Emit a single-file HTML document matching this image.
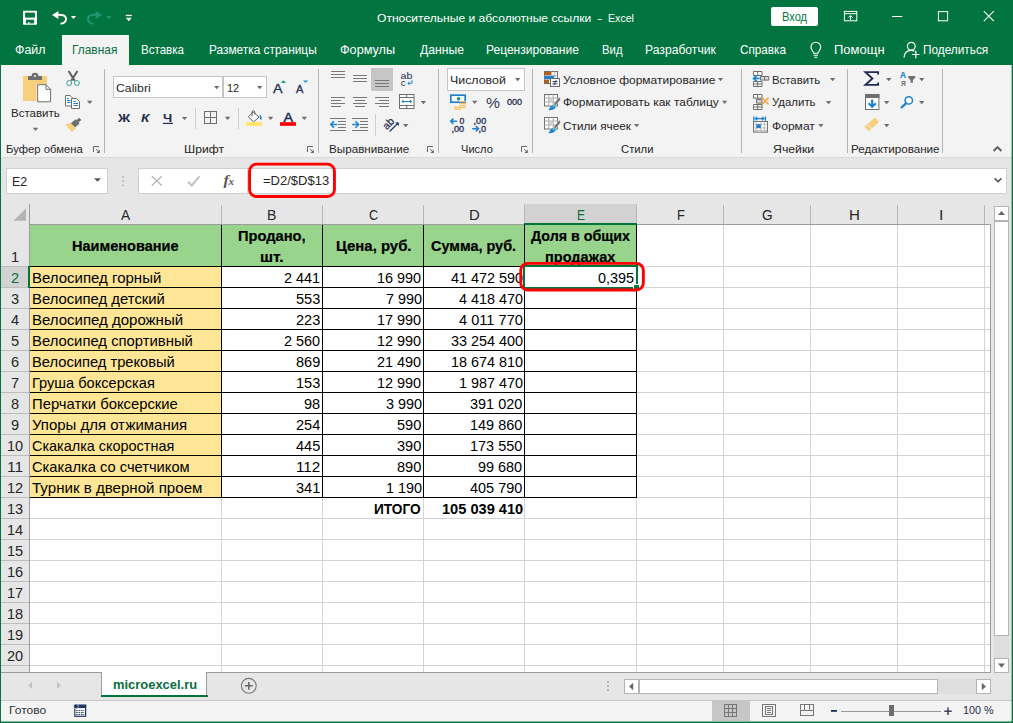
<!DOCTYPE html>
<html lang="ru"><head><meta charset="utf-8"><title>Excel</title>
<style>
html,body{margin:0;padding:0;background:#e6e6e6;}
body{width:1013px;height:723px;overflow:hidden;position:relative;font-family:"Liberation Sans", sans-serif;}
#w{position:absolute;left:0;top:0;width:1013px;height:723px;overflow:hidden;background:#e6e6e6;}
#w div{position:absolute;}
#w span.t{position:absolute;white-space:pre;line-height:20px;height:20px;transform-origin:0 50%;}
#w svg{position:absolute;overflow:visible;}
</style></head>
<body><div id="w">
<div style="left:0px;top:0px;width:1013px;height:65px;background:#02743f"></div>
<div style="left:62px;top:35px;width:67px;height:30px;background:#f3f3f3"></div>
<div style="left:0px;top:65px;width:1013px;height:92px;background:#f3f3f3"></div>
<div style="left:0px;top:157px;width:1013px;height:1px;background:#dadada"></div>
<div style="left:104px;top:69px;width:1px;height:84px;background:#b4b4b4"></div>
<div style="left:318px;top:69px;width:1px;height:84px;background:#b4b4b4"></div>
<div style="left:438px;top:69px;width:1px;height:84px;background:#b4b4b4"></div>
<div style="left:532px;top:69px;width:1px;height:84px;background:#b4b4b4"></div>
<div style="left:741px;top:69px;width:1px;height:84px;background:#b4b4b4"></div>
<div style="left:847px;top:69px;width:1px;height:84px;background:#b4b4b4"></div>
<div style="left:942px;top:69px;width:1px;height:84px;background:#b4b4b4"></div>
<div style="left:195px;top:108px;width:1px;height:21px;background:#d0d0d0"></div>
<div style="left:238px;top:108px;width:1px;height:21px;background:#d0d0d0"></div>
<div style="left:375px;top:114px;width:1px;height:22px;background:#d0d0d0"></div>
<div style="left:113px;top:76px;width:110px;height:22px;background:#fff;border:1px solid #c6c6c6;box-sizing:border-box"></div>
<div style="left:223px;top:76px;width:44px;height:22px;background:#fff;border:1px solid #c6c6c6;box-sizing:border-box"></div>
<div style="left:447px;top:68px;width:78px;height:23px;background:#fff;border:1px solid #c6c6c6;box-sizing:border-box"></div>
<div style="left:371px;top:68px;width:22px;height:23px;background:#c6c6c6"></div>
<div style="left:6px;top:168px;width:102px;height:26px;background:#fff;border:1px solid #cfcfcf;box-sizing:border-box"></div>
<div style="left:138px;top:168px;width:869px;height:26px;background:#fff;border:1px solid #cfcfcf;box-sizing:border-box"></div>
<div style="left:29px;top:224px;width:962px;height:449px;background:#fff"></div>
<div style="left:524px;top:204px;width:113px;height:20px;background:#d2d2d2"></div>
<div style="left:1px;top:267px;width:28px;height:20px;background:#d2d2d2"></div>
<div style="left:29px;top:205px;width:1px;height:19px;background:#b8b8b8"></div>
<div style="left:221px;top:205px;width:1px;height:19px;background:#b8b8b8"></div>
<div style="left:322px;top:205px;width:1px;height:19px;background:#b8b8b8"></div>
<div style="left:423px;top:205px;width:1px;height:19px;background:#b8b8b8"></div>
<div style="left:524px;top:205px;width:1px;height:19px;background:#b8b8b8"></div>
<div style="left:636px;top:205px;width:1px;height:19px;background:#b8b8b8"></div>
<div style="left:723px;top:205px;width:1px;height:19px;background:#b8b8b8"></div>
<div style="left:810px;top:205px;width:1px;height:19px;background:#b8b8b8"></div>
<div style="left:897px;top:205px;width:1px;height:19px;background:#b8b8b8"></div>
<div style="left:984px;top:205px;width:1px;height:19px;background:#b8b8b8"></div>
<div style="left:1px;top:266px;width:28px;height:1px;background:#bdbdbd"></div>
<div style="left:1px;top:287px;width:28px;height:1px;background:#bdbdbd"></div>
<div style="left:1px;top:308px;width:28px;height:1px;background:#bdbdbd"></div>
<div style="left:1px;top:329px;width:28px;height:1px;background:#bdbdbd"></div>
<div style="left:1px;top:350px;width:28px;height:1px;background:#bdbdbd"></div>
<div style="left:1px;top:371px;width:28px;height:1px;background:#bdbdbd"></div>
<div style="left:1px;top:392px;width:28px;height:1px;background:#bdbdbd"></div>
<div style="left:1px;top:413px;width:28px;height:1px;background:#bdbdbd"></div>
<div style="left:1px;top:434px;width:28px;height:1px;background:#bdbdbd"></div>
<div style="left:1px;top:455px;width:28px;height:1px;background:#bdbdbd"></div>
<div style="left:1px;top:476px;width:28px;height:1px;background:#bdbdbd"></div>
<div style="left:1px;top:497px;width:28px;height:1px;background:#bdbdbd"></div>
<div style="left:1px;top:518px;width:28px;height:1px;background:#bdbdbd"></div>
<div style="left:1px;top:539px;width:28px;height:1px;background:#bdbdbd"></div>
<div style="left:1px;top:560px;width:28px;height:1px;background:#bdbdbd"></div>
<div style="left:1px;top:581px;width:28px;height:1px;background:#bdbdbd"></div>
<div style="left:1px;top:602px;width:28px;height:1px;background:#bdbdbd"></div>
<div style="left:1px;top:623px;width:28px;height:1px;background:#bdbdbd"></div>
<div style="left:1px;top:644px;width:28px;height:1px;background:#bdbdbd"></div>
<div style="left:1px;top:665px;width:28px;height:1px;background:#bdbdbd"></div>
<div style="left:221px;top:225px;width:1px;height:447px;background:#d4d4d4"></div>
<div style="left:322px;top:225px;width:1px;height:447px;background:#d4d4d4"></div>
<div style="left:423px;top:225px;width:1px;height:447px;background:#d4d4d4"></div>
<div style="left:524px;top:225px;width:1px;height:447px;background:#d4d4d4"></div>
<div style="left:636px;top:225px;width:1px;height:447px;background:#d4d4d4"></div>
<div style="left:723px;top:225px;width:1px;height:447px;background:#d4d4d4"></div>
<div style="left:810px;top:225px;width:1px;height:447px;background:#d4d4d4"></div>
<div style="left:897px;top:225px;width:1px;height:447px;background:#d4d4d4"></div>
<div style="left:984px;top:225px;width:1px;height:447px;background:#d4d4d4"></div>
<div style="left:30px;top:266px;width:960px;height:1px;background:#d4d4d4"></div>
<div style="left:30px;top:287px;width:960px;height:1px;background:#d4d4d4"></div>
<div style="left:30px;top:308px;width:960px;height:1px;background:#d4d4d4"></div>
<div style="left:30px;top:329px;width:960px;height:1px;background:#d4d4d4"></div>
<div style="left:30px;top:350px;width:960px;height:1px;background:#d4d4d4"></div>
<div style="left:30px;top:371px;width:960px;height:1px;background:#d4d4d4"></div>
<div style="left:30px;top:392px;width:960px;height:1px;background:#d4d4d4"></div>
<div style="left:30px;top:413px;width:960px;height:1px;background:#d4d4d4"></div>
<div style="left:30px;top:434px;width:960px;height:1px;background:#d4d4d4"></div>
<div style="left:30px;top:455px;width:960px;height:1px;background:#d4d4d4"></div>
<div style="left:30px;top:476px;width:960px;height:1px;background:#d4d4d4"></div>
<div style="left:30px;top:497px;width:960px;height:1px;background:#d4d4d4"></div>
<div style="left:30px;top:518px;width:960px;height:1px;background:#d4d4d4"></div>
<div style="left:30px;top:539px;width:960px;height:1px;background:#d4d4d4"></div>
<div style="left:30px;top:560px;width:960px;height:1px;background:#d4d4d4"></div>
<div style="left:30px;top:581px;width:960px;height:1px;background:#d4d4d4"></div>
<div style="left:30px;top:602px;width:960px;height:1px;background:#d4d4d4"></div>
<div style="left:30px;top:623px;width:960px;height:1px;background:#d4d4d4"></div>
<div style="left:30px;top:644px;width:960px;height:1px;background:#d4d4d4"></div>
<div style="left:30px;top:665px;width:960px;height:1px;background:#d4d4d4"></div>
<div style="left:30px;top:225px;width:607px;height:41px;background:#98d48c"></div>
<div style="left:30px;top:267px;width:191px;height:230px;background:#fee696"></div>
<div style="left:221px;top:224px;width:1px;height:274px;background:#000"></div>
<div style="left:322px;top:224px;width:1px;height:274px;background:#000"></div>
<div style="left:423px;top:224px;width:1px;height:274px;background:#000"></div>
<div style="left:524px;top:224px;width:1px;height:274px;background:#000"></div>
<div style="left:636px;top:224px;width:1px;height:274px;background:#000"></div>
<div style="left:29px;top:266px;width:608px;height:1px;background:#000"></div>
<div style="left:29px;top:287px;width:608px;height:1px;background:#000"></div>
<div style="left:29px;top:308px;width:608px;height:1px;background:#000"></div>
<div style="left:29px;top:329px;width:608px;height:1px;background:#000"></div>
<div style="left:29px;top:350px;width:608px;height:1px;background:#000"></div>
<div style="left:29px;top:371px;width:608px;height:1px;background:#000"></div>
<div style="left:29px;top:392px;width:608px;height:1px;background:#000"></div>
<div style="left:29px;top:413px;width:608px;height:1px;background:#000"></div>
<div style="left:29px;top:434px;width:608px;height:1px;background:#000"></div>
<div style="left:29px;top:455px;width:608px;height:1px;background:#000"></div>
<div style="left:29px;top:476px;width:608px;height:1px;background:#000"></div>
<div style="left:29px;top:497px;width:608px;height:1px;background:#000"></div>
<div style="left:29px;top:224px;width:962px;height:1px;background:#9b9b9b"></div>
<div style="left:29px;top:204px;width:1px;height:469px;background:#9b9b9b"></div>
<div style="left:990px;top:224px;width:1px;height:449px;background:#9b9b9b"></div>
<div style="left:1px;top:672px;width:990px;height:1px;background:#9b9b9b"></div>
<div style="left:524px;top:223px;width:113px;height:2px;background:#02743f"></div>
<div style="left:28px;top:266px;width:2px;height:22px;background:#02743f"></div>
<div style="left:523px;top:265px;width:115px;height:24px;border:2px solid #02743f;box-sizing:border-box;background:#fff"></div>
<div style="left:633px;top:284px;width:6px;height:6px;background:#02743f;border-left:1px solid #fff;border-top:1px solid #fff;box-sizing:border-box"></div>
<div style="left:247px;top:169px;width:1px;height:24px;background:#d6d6d6"></div>
<div style="left:994px;top:206px;width:15px;height:15px;background:#fff;border:1px solid #b2b5b3;box-sizing:border-box"></div>
<div style="left:994px;top:221px;width:15px;height:415px;background:#fff;border:1px solid #b2b5b3;box-sizing:border-box"></div>
<div style="left:994px;top:636px;width:15px;height:22px;background:#dedede"></div>
<div style="left:994px;top:658px;width:15px;height:15px;background:#fff;border:1px solid #b2b5b3;box-sizing:border-box"></div>
<div style="left:624px;top:679px;width:15px;height:15px;background:#fff;border:1px solid #b4b4b4;box-sizing:border-box"></div>
<div style="left:639px;top:679px;width:299px;height:15px;background:#fff;border:1px solid #b4b4b4;box-sizing:border-box"></div>
<div style="left:938px;top:679px;width:38px;height:15px;background:#dedede"></div>
<div style="left:976px;top:679px;width:15px;height:15px;background:#fff;border:1px solid #b4b4b4;box-sizing:border-box"></div>
<div style="left:101px;top:673px;width:106px;height:23px;background:#fff;border-left:1px solid #9b9b9b;border-right:1px solid #9b9b9b;box-sizing:border-box"></div>
<div style="left:102px;top:672px;width:104px;height:2px;background:#fff"></div>
<div style="left:101px;top:695px;width:107px;height:2px;background:#02743f"></div>
<div style="left:0px;top:700px;width:1013px;height:23px;background:#f3f3f3"></div>
<div style="left:0px;top:700px;width:1013px;height:1px;background:#c8c8c8"></div>
<div style="left:712px;top:701px;width:38px;height:20px;background:#c6c6c6"></div>
<div style="left:841px;top:711px;width:100px;height:1px;background:#9a9a9a"></div>
<div style="left:889px;top:705px;width:5px;height:11px;background:#6e6e6e"></div>
<div style="left:0px;top:65px;width:1px;height:658px;background:#02743f"></div>
<div style="left:1012px;top:0px;width:1px;height:723px;background:#02743f"></div>
<div style="left:1011px;top:65px;width:1px;height:658px;background:#02743f;opacity:.35"></div>
<div style="left:0px;top:722px;width:1013px;height:1px;background:#02743f"></div>
<div style="left:0px;top:721px;width:1013px;height:1px;background:#02743f;opacity:.45"></div>
<div style="left:771px;top:7px;width:47px;height:19px;background:#fff;border-radius:2px"></div>

<span class="t" style="left:377.1px;top:7.7px;font-size:11.8px;color:#fff;transform:scaleX(1.0228);">Относительные и абсолютные ссылки</span>
<span class="t" style="left:597.2px;top:7.7px;font-size:11.8px;color:#fff;transform:scaleX(1.3972);">-</span>
<span class="t" style="left:607.8px;top:7.7px;font-size:11.8px;color:#fff;transform:scaleX(0.9005);">Excel</span>
<span class="t" style="left:781.9px;top:6.7px;font-size:12.4px;color:#0a7742;transform:scaleX(0.8954);">Вход</span>
<span class="t" style="left:15.1px;top:39.6px;font-size:12.4px;color:#fff;transform:scaleX(0.9954);">Файл</span>
<span class="t" style="left:141.1px;top:39.6px;font-size:12.4px;color:#fff;transform:scaleX(0.9315);">Вставка</span>
<span class="t" style="left:208.5px;top:39.6px;font-size:12.4px;color:#fff;transform:scaleX(0.9579);">Разметка страницы</span>
<span class="t" style="left:340.3px;top:39.6px;font-size:12.4px;color:#fff;transform:scaleX(1.0206);">Формулы</span>
<span class="t" style="left:419.9px;top:39.6px;font-size:12.4px;color:#fff;transform:scaleX(0.9807);">Данные</span>
<span class="t" style="left:486.0px;top:39.6px;font-size:12.4px;color:#fff;transform:scaleX(0.9704);">Рецензирование</span>
<span class="t" style="left:601.7px;top:39.6px;font-size:12.4px;color:#fff;transform:scaleX(0.9138);">Вид</span>
<span class="t" style="left:645.3px;top:39.6px;font-size:12.4px;color:#fff;transform:scaleX(0.9799);">Разработчик</span>
<span class="t" style="left:739.8px;top:39.6px;font-size:12.4px;color:#fff;transform:scaleX(0.9452);">Справка</span>
<span class="t" style="left:834.2px;top:39.6px;font-size:12.4px;color:#fff;transform:scaleX(1.0480);">Помощн</span>
<span class="t" style="left:922.8px;top:39.6px;font-size:12.4px;color:#fff;transform:scaleX(0.9530);">Поделиться</span>
<span class="t" style="left:72.2px;top:39.6px;font-size:12.4px;color:#0b6e3f;transform:scaleX(0.9616);">Главная</span>
<span class="t" style="left:10.5px;top:103.2px;font-size:11.8px;color:#262626;transform:scaleX(0.9746);">Вставить</span>
<span class="t" style="left:5.6px;top:139.0px;font-size:10.5px;color:#262626;transform:scaleX(1.0752);">Буфер обмена</span>
<span class="t" style="left:116.1px;top:77.6px;font-size:11.8px;color:#262626;transform:scaleX(1.0377);">Calibri</span>
<span class="t" style="left:227.4px;top:77.6px;font-size:11.8px;color:#262626;transform:scaleX(0.9250);">12</span>
<span class="t" style="left:117.9px;top:107.6px;font-size:11.8px;color:#1e2a4a;transform:scaleX(1.1454);font-weight:bold">Ж</span>
<span class="t" style="left:140.8px;top:107.6px;font-size:11.8px;color:#1e2a4a;transform:scaleX(1.1625);font-weight:bold;font-style:italic">К</span>
<span class="t" style="left:163.1px;top:107.6px;font-size:11.8px;color:#1e2a4a;transform:scaleX(1.1066);font-weight:bold">Ч</span>
<span class="t" style="left:183.5px;top:139.0px;font-size:10.5px;color:#262626;transform:scaleX(1.1582);">Шрифт</span>
<span class="t" style="left:329.4px;top:139.0px;font-size:10.5px;color:#262626;transform:scaleX(1.1108);">Выравнивание</span>
<span class="t" style="left:449.6px;top:69.5px;font-size:11.8px;color:#262626;transform:scaleX(1.0484);">Числовой</span>
<span class="t" style="left:460.6px;top:139.0px;font-size:10.5px;color:#262626;transform:scaleX(1.0540);">Число</span>
<span class="t" style="left:485.9px;top:92.6px;font-size:15px;color:#333a4d;transform:scaleX(1.0477);">%</span>
<span class="t" style="left:506.5px;top:92.1px;font-size:9.6px;color:#1e2a4a;transform:scaleX(0.9363);-webkit-text-stroke:0.3px #1e2a4a">000</span>
<span class="t" style="left:563.2px;top:69.7px;font-size:11.8px;color:#262626;transform:scaleX(1.0149);">Условное форматирование</span>
<span class="t" style="left:562.8px;top:92.4px;font-size:11.8px;color:#262626;transform:scaleX(1.0148);">Форматировать как таблицу</span>
<span class="t" style="left:562.9px;top:115.6px;font-size:11.8px;color:#262626;transform:scaleX(0.9992);">Стили ячеек</span>
<span class="t" style="left:621.0px;top:139.0px;font-size:10.5px;color:#262626;transform:scaleX(1.0724);">Стили</span>
<span class="t" style="left:771.7px;top:69.7px;font-size:11.8px;color:#262626;transform:scaleX(0.9643);">Вставить</span>
<span class="t" style="left:772.3px;top:92.4px;font-size:11.8px;color:#262626;transform:scaleX(0.9669);">Удалить</span>
<span class="t" style="left:771.9px;top:115.6px;font-size:11.8px;color:#262626;transform:scaleX(1.0239);">Формат</span>
<span class="t" style="left:773.4px;top:139.0px;font-size:10.5px;color:#262626;transform:scaleX(1.1706);">Ячейки</span>
<span class="t" style="left:850.6px;top:139.0px;font-size:10.5px;color:#262626;transform:scaleX(1.1065);">Редактирование</span>
<span class="t" style="left:12.4px;top:171.5px;font-size:12.2px;color:#262626;transform:scaleX(1.0205);">E2</span>
<span class="t" style="left:262.6px;top:171.3px;font-size:12.4px;color:#262626;transform:scaleX(1.0494);">=D2/$D$13</span>
<span class="t" style="left:8.7px;top:700.1px;font-size:10.8px;color:#333;transform:scaleX(1.1147);">Готово</span>
<span class="t" style="left:962.8px;top:700.1px;font-size:10.8px;color:#1e2a4a;transform:scaleX(0.9978);">100 %</span>
<span class="t" style="left:112.6px;top:675.0px;font-size:12.8px;color:#0b6e3f;transform:scaleX(1.0109);font-weight:bold">microexcel.ru</span>
<span class="t" style="left:121.2px;top:204.8px;font-size:14.4px;color:#262626;transform:scaleX(0.9457);">A</span>
<span class="t" style="left:267.4px;top:204.8px;font-size:14.4px;color:#262626;transform:scaleX(0.9819);">B</span>
<span class="t" style="left:368.6px;top:204.8px;font-size:14.4px;color:#262626;transform:scaleX(0.8812);">C</span>
<span class="t" style="left:468.7px;top:204.8px;font-size:14.4px;color:#262626;transform:scaleX(1.0335);">D</span>
<span class="t" style="left:577.0px;top:204.8px;font-size:14.4px;color:#0b6e3f;transform:scaleX(0.8306);">E</span>
<span class="t" style="left:677.0px;top:204.8px;font-size:14.4px;color:#262626;transform:scaleX(0.8984);">F</span>
<span class="t" style="left:761.8px;top:204.8px;font-size:14.4px;color:#262626;transform:scaleX(0.9520);">G</span>
<span class="t" style="left:848.6px;top:204.8px;font-size:14.4px;color:#262626;transform:scaleX(1.0482);">H</span>
<span class="t" style="left:938.8px;top:204.8px;font-size:14.4px;color:#262626;transform:scaleX(1.0890);">I</span>
<span class="t" style="left:10.9px;top:247.3px;font-size:14.4px;color:#262626;transform:scaleX(1.0126);">1</span>
<span class="t" style="left:10.9px;top:267.6px;font-size:14.4px;color:#0b6e3f;transform:scaleX(1.0126);">2</span>
<span class="t" style="left:10.9px;top:288.6px;font-size:14.4px;color:#262626;transform:scaleX(1.0126);">3</span>
<span class="t" style="left:10.9px;top:309.6px;font-size:14.4px;color:#262626;transform:scaleX(1.0126);">4</span>
<span class="t" style="left:10.9px;top:330.6px;font-size:14.4px;color:#262626;transform:scaleX(1.0126);">5</span>
<span class="t" style="left:10.9px;top:351.6px;font-size:14.4px;color:#262626;transform:scaleX(1.0126);">6</span>
<span class="t" style="left:10.9px;top:372.6px;font-size:14.4px;color:#262626;transform:scaleX(1.0126);">7</span>
<span class="t" style="left:10.9px;top:393.6px;font-size:14.4px;color:#262626;transform:scaleX(1.0126);">8</span>
<span class="t" style="left:10.9px;top:414.6px;font-size:14.4px;color:#262626;transform:scaleX(1.0126);">9</span>
<span class="t" style="left:6.9px;top:435.6px;font-size:14.4px;color:#262626;transform:scaleX(1.0126);">10</span>
<span class="t" style="left:6.9px;top:456.6px;font-size:14.4px;color:#262626;transform:scaleX(1.0850);">11</span>
<span class="t" style="left:6.9px;top:477.6px;font-size:14.4px;color:#262626;transform:scaleX(1.0126);">12</span>
<span class="t" style="left:6.9px;top:498.6px;font-size:14.4px;color:#262626;transform:scaleX(1.0126);">13</span>
<span class="t" style="left:6.9px;top:519.6px;font-size:14.4px;color:#262626;transform:scaleX(1.0126);">14</span>
<span class="t" style="left:6.9px;top:540.6px;font-size:14.4px;color:#262626;transform:scaleX(1.0126);">15</span>
<span class="t" style="left:6.9px;top:561.6px;font-size:14.4px;color:#262626;transform:scaleX(1.0126);">16</span>
<span class="t" style="left:6.9px;top:582.6px;font-size:14.4px;color:#262626;transform:scaleX(1.0126);">17</span>
<span class="t" style="left:6.9px;top:603.6px;font-size:14.4px;color:#262626;transform:scaleX(1.0126);">18</span>
<span class="t" style="left:6.9px;top:624.6px;font-size:14.4px;color:#262626;transform:scaleX(1.0126);">19</span>
<span class="t" style="left:6.9px;top:645.6px;font-size:14.4px;color:#262626;transform:scaleX(1.0126);">20</span>
<span class="t" style="left:72.4px;top:236.0px;font-size:13.9px;color:#000;transform:scaleX(1.0452);font-weight:bold;-webkit-text-stroke:0.2px #000">Наименование</span>
<span class="t" style="left:237.7px;top:226.4px;font-size:13.9px;color:#000;transform:scaleX(1.0556);font-weight:bold;-webkit-text-stroke:0.2px #000">Продано,</span>
<span class="t" style="left:260.4px;top:247.4px;font-size:13.9px;color:#000;transform:scaleX(1.1258);font-weight:bold;-webkit-text-stroke:0.2px #000">шт.</span>
<span class="t" style="left:335.5px;top:236.0px;font-size:13.9px;color:#000;transform:scaleX(1.0730);font-weight:bold;-webkit-text-stroke:0.2px #000">Цена, руб.</span>
<span class="t" style="left:431.4px;top:236.0px;font-size:13.9px;color:#000;transform:scaleX(1.0394);font-weight:bold;-webkit-text-stroke:0.2px #000">Сумма, руб.</span>
<span class="t" style="left:531.1px;top:226.4px;font-size:13.9px;color:#000;transform:scaleX(1.0260);font-weight:bold;-webkit-text-stroke:0.2px #000">Доля в общих</span>
<div style="left:525px;top:225px;width:111px;height:41px;overflow:hidden"><span class="t" style="left:20.0px;top:22.4px;font-size:13.9px;color:#000;transform:scaleX(1.0471);font-weight:bold;-webkit-text-stroke:0.2px #000">продажах</span></div>
<span class="t" style="left:32.1px;top:267.5px;font-size:14.4px;color:#000;transform:scaleX(1.0421);">Велосипед горный</span>
<span class="t" style="left:284.4px;top:267.5px;font-size:14.4px;color:#000;transform:scaleX(1.0006);">2 441</span>
<span class="t" style="left:377.4px;top:267.5px;font-size:14.4px;color:#000;transform:scaleX(1.0028);">16 990</span>
<span class="t" style="left:450.5px;top:267.5px;font-size:14.4px;color:#000;transform:scaleX(1.0006);">41 472 590</span>
<span class="t" style="left:32.1px;top:288.5px;font-size:14.4px;color:#000;transform:scaleX(1.0327);">Велосипед детский</span>
<span class="t" style="left:296.2px;top:288.5px;font-size:14.4px;color:#000;transform:scaleX(1.0126);">553</span>
<span class="t" style="left:385.5px;top:288.5px;font-size:14.4px;color:#000;transform:scaleX(1.0006);">7 990</span>
<span class="t" style="left:458.6px;top:288.5px;font-size:14.4px;color:#000;transform:scaleX(0.9991);">4 418 470</span>
<span class="t" style="left:32.1px;top:309.5px;font-size:14.4px;color:#000;transform:scaleX(1.0417);">Велосипед дорожный</span>
<span class="t" style="left:296.2px;top:309.5px;font-size:14.4px;color:#000;transform:scaleX(1.0126);">223</span>
<span class="t" style="left:377.4px;top:309.5px;font-size:14.4px;color:#000;transform:scaleX(1.0028);">17 990</span>
<span class="t" style="left:458.6px;top:309.5px;font-size:14.4px;color:#000;transform:scaleX(1.0161);">4 011 770</span>
<span class="t" style="left:32.1px;top:330.5px;font-size:14.4px;color:#000;transform:scaleX(1.0304);">Велосипед спортивный</span>
<span class="t" style="left:284.4px;top:330.5px;font-size:14.4px;color:#000;transform:scaleX(1.0006);">2 560</span>
<span class="t" style="left:377.4px;top:330.5px;font-size:14.4px;color:#000;transform:scaleX(1.0028);">12 990</span>
<span class="t" style="left:450.5px;top:330.5px;font-size:14.4px;color:#000;transform:scaleX(1.0006);">33 254 400</span>
<span class="t" style="left:32.1px;top:351.5px;font-size:14.4px;color:#000;transform:scaleX(1.0210);">Велосипед трековый</span>
<span class="t" style="left:296.2px;top:351.5px;font-size:14.4px;color:#000;transform:scaleX(1.0126);">869</span>
<span class="t" style="left:377.4px;top:351.5px;font-size:14.4px;color:#000;transform:scaleX(1.0028);">21 490</span>
<span class="t" style="left:450.5px;top:351.5px;font-size:14.4px;color:#000;transform:scaleX(1.0006);">18 674 810</span>
<span class="t" style="left:32.1px;top:372.5px;font-size:14.4px;color:#000;transform:scaleX(1.0141);">Груша боксерская</span>
<span class="t" style="left:296.2px;top:372.5px;font-size:14.4px;color:#000;transform:scaleX(1.0126);">153</span>
<span class="t" style="left:377.4px;top:372.5px;font-size:14.4px;color:#000;transform:scaleX(1.0028);">12 990</span>
<span class="t" style="left:458.6px;top:372.5px;font-size:14.4px;color:#000;transform:scaleX(0.9991);">1 987 470</span>
<span class="t" style="left:32.1px;top:393.5px;font-size:14.4px;color:#000;transform:scaleX(1.0303);">Перчатки боксерские</span>
<span class="t" style="left:304.3px;top:393.5px;font-size:14.4px;color:#000;transform:scaleX(1.0126);">98</span>
<span class="t" style="left:385.5px;top:393.5px;font-size:14.4px;color:#000;transform:scaleX(1.0006);">3 990</span>
<span class="t" style="left:470.3px;top:393.5px;font-size:14.4px;color:#000;transform:scaleX(1.0043);">391 020</span>
<span class="t" style="left:31.8px;top:414.5px;font-size:14.4px;color:#000;transform:scaleX(1.0387);">Упоры для отжимания</span>
<span class="t" style="left:296.2px;top:414.5px;font-size:14.4px;color:#000;transform:scaleX(1.0126);">254</span>
<span class="t" style="left:397.3px;top:414.5px;font-size:14.4px;color:#000;transform:scaleX(1.0126);">590</span>
<span class="t" style="left:470.3px;top:414.5px;font-size:14.4px;color:#000;transform:scaleX(1.0043);">149 860</span>
<span class="t" style="left:31.8px;top:435.5px;font-size:14.4px;color:#000;transform:scaleX(1.0030);">Скакалка скоростная</span>
<span class="t" style="left:296.2px;top:435.5px;font-size:14.4px;color:#000;transform:scaleX(1.0126);">445</span>
<span class="t" style="left:397.3px;top:435.5px;font-size:14.4px;color:#000;transform:scaleX(1.0126);">390</span>
<span class="t" style="left:470.3px;top:435.5px;font-size:14.4px;color:#000;transform:scaleX(1.0043);">173 550</span>
<span class="t" style="left:31.8px;top:456.5px;font-size:14.4px;color:#000;transform:scaleX(1.0203);">Скакалка со счетчиком</span>
<span class="t" style="left:296.2px;top:456.5px;font-size:14.4px;color:#000;transform:scaleX(1.0597);">112</span>
<span class="t" style="left:397.3px;top:456.5px;font-size:14.4px;color:#000;transform:scaleX(1.0126);">890</span>
<span class="t" style="left:478.4px;top:456.5px;font-size:14.4px;color:#000;transform:scaleX(1.0028);">99 680</span>
<span class="t" style="left:31.9px;top:477.5px;font-size:14.4px;color:#000;transform:scaleX(1.0485);">Турник в дверной проем</span>
<span class="t" style="left:296.2px;top:477.5px;font-size:14.4px;color:#000;transform:scaleX(1.0126);">341</span>
<span class="t" style="left:385.5px;top:477.5px;font-size:14.4px;color:#000;transform:scaleX(1.0006);">1 190</span>
<span class="t" style="left:470.3px;top:477.5px;font-size:14.4px;color:#000;transform:scaleX(1.0043);">405 790</span>
<span class="t" style="left:597.9px;top:267.8px;font-size:14.4px;color:#000;transform:scaleX(1.0008);">0,395</span>
<span class="t" style="left:373.7px;top:498.8px;font-size:14.4px;color:#000;transform:scaleX(0.9499);font-weight:bold">ИТОГО</span>
<span class="t" style="left:441.5px;top:498.8px;font-size:14.4px;color:#000;transform:scaleX(1.0148);font-weight:bold">105 039 410</span>
<svg width="1013" height="723" viewBox="0 0 1013 723" style="left:0;top:0"><rect x="249.55" y="164.15" width="84.9" height="32.4" rx="7" fill="none" stroke="#fe0000" stroke-width="2.9"/><rect x="520.75" y="263.35" width="122.6" height="26.7" rx="7" fill="none" stroke="#fe0000" stroke-width="2.9"/>
<rect x="23" y="10.8" width="14" height="14" rx="0.8" fill="#fff"/><rect x="25.1" y="12.6" width="9.8" height="5" fill="#02743f"/><rect x="25.9" y="19.7" width="8.2" height="3.7" fill="#02743f"/><rect x="28" y="22.2" width="1.7" height="1.3" fill="#fff"/><path d="M58.4 10.9L52 14.9L58.4 18.9z" fill="#fff"/><path d="M57 14.9C62 14.4 66.3 15.4 66 19.4C65.6 22.4 63.2 23.6 60.4 23.6" fill="none" stroke="#fff" stroke-width="1.9"/><path d="M70.9 16h5.2l-2.6 3z" fill="#fff"/><path d="M95.6 10.9L102 14.9L95.6 18.9z" fill="#1f9573"/><path d="M97 14.9C92 14.4 87.7 15.4 88 19.4C88.4 22.4 90.8 23.6 93.6 23.6" fill="none" stroke="#1f9573" stroke-width="1.9"/><path d="M106.2 16h5.2l-2.6 3z" fill="#1f9573"/><rect x="125.8" y="14.8" width="6" height="1.3" fill="#fff"/><path d="M125.8 17.8h6l-3.0 3.4z" fill="#fff"/>
<rect x="844.4" y="11.4" width="12.4" height="9.4" fill="none" stroke="#fff" stroke-width="1"/><path d="M844.4 13.7h12.4" stroke="#fff" stroke-width="1"/><path d="M850.6 20v-4.2M848.6 17.6l2-2l2 2" fill="none" stroke="#fff" stroke-width="1"/><rect x="892" y="16" width="10.3" height="1" fill="#fff"/><rect x="938.4" y="11.6" width="9.2" height="9.2" fill="none" stroke="#fff" stroke-width="1"/><path d="M983.8 11.2l10 10M993.8 11.2l-10 10" stroke="#fff" stroke-width="1.1"/><g transform="translate(0.9 0.9)"><path d="M812.7 52.3c0-1.8-2.7-3-2.7-6.1a4.9 4.9 0 0 1 9.8 0c0 3.1-2.7 4.3-2.7 6.1z" fill="none" stroke="#fff" stroke-width="1.15"/><path d="M812.7 54.3h4.4M813.4 56.3h3" stroke="#fff" stroke-width="1.1"/></g><circle cx="911.3" cy="46.3" r="3.9" fill="none" stroke="#fff" stroke-width="1.2"/><path d="M904 57.5c0.4-4.6 3.2-7.2 7-7.2c1.4 0 2.4 0.3 3.4 0.9" fill="none" stroke="#fff" stroke-width="1.2"/><path d="M915.8 50.8v7.4M912.1 54.5h7.4" stroke="#fff" stroke-width="1.2"/>
<path d="M23 76h24v8.5h-10.5v16.5h-13.5z" fill="#f8cf7c"/><path d="M28 80v-4h3.6a3.4 3.2 0 0 1 6.8 0h3.6v4z" fill="#6e6e6e"/><circle cx="35" cy="76" r="1.1" fill="#f3f3f3"/><path d="M37.7 84.7h8.3l4.6 4.6v12.5h-12.9z" fill="#fff" stroke="#6e6e6e" stroke-width="1"/><path d="M46 84.7v4.6h4.6" fill="none" stroke="#6e6e6e" stroke-width="1"/><path d="M32.8 127.8h5.4l-2.7 3.2z" fill="#6e6e6e"/><path d="M68.6 71L74.7 80.8M77.4 71L71.3 80.8" stroke="#636363" stroke-width="2.1" fill="none"/><circle cx="69.2" cy="83" r="2.5" fill="none" stroke="#1f9f94" stroke-width="0.9"/><circle cx="76.9" cy="83" r="2.5" fill="none" stroke="#1f9f94" stroke-width="0.9"/><path d="M65.5 95.5h4.5l2.5 2.5v8h-7z" fill="#fff" stroke="#6e6e6e" stroke-width="1"/><path d="M71.5 98.5h5l3 3v7h-8z" fill="#fff" stroke="#6e6e6e" stroke-width="1"/><path d="M67 98.5h2M67 100.5h3.5M67 102.5h3.5M73.3 101.5h2.5M73.3 103.5h4.8M73.3 105.5h4.8" stroke="#1e82d2" stroke-width="1"/><path d="M87 100.8h5.4l-2.7 3.2z" fill="#6e6e6e"/><path d="M76.3 120.3l2.8-2.6l2.2 2.2l-2.8 2.6z" fill="#6e6e6e"/><path d="M70.8 123.2l4.8-4l4 4.2l-4.6 4.2z" fill="#6e6e6e"/><path d="M65.3 124.2l5.2-1.2l5.6 5.6l-4.3 3.4z" fill="#f8cf7c"/><path d="M99.0 146.5h-5.5v5.5" fill="none" stroke="#6a6668" stroke-width="1"/><path d="M96.1 149.1L99.1 152.1" fill="none" stroke="#6a6668" stroke-width="1"/><path d="M99.8 149.5V152.9H96.4z" fill="#6a6668"/>
<path d="M214 86h5.4l-2.7 3.2z" fill="#6e6e6e"/><path d="M257 86h5.4l-2.7 3.2z" fill="#6e6e6e"/><text x="273" y="92.8" font-size="13.2" fill="#1f2d54" stroke="#1f2d54" stroke-width="0.3" font-family="Liberation Sans" textLength="9.6" lengthAdjust="spacingAndGlyphs">A</text><path d="M280.9 82.9l2.6-2.6l2.6 2.6z" fill="#1a9a7a"/><text x="296" y="92.8" font-size="10.4" fill="#1f2d54" stroke="#1f2d54" stroke-width="0.3" font-family="Liberation Sans" textLength="7.4" lengthAdjust="spacingAndGlyphs">A</text><path d="M303 80.4h5.2l-2.6 2.6z" fill="#2b9bc4"/><rect x="163" y="122.8" width="10" height="1.2" fill="#1f2d54"/><path d="M181.8 116.9h5.4l-2.7 3.2z" fill="#6e6e6e"/><rect x="204.5" y="111.5" width="12" height="12" fill="none" stroke="#6e6e6e" stroke-width="1"/><path d="M210.5 111.5v12M204.5 117.5h12" stroke="#6e6e6e" stroke-width="1"/><path d="M224.9 116.8h5.4l-2.7 3.2z" fill="#6e6e6e"/><path d="M253.2 112l5.8 5.2l-5.4 4.6l-5.2-5z" fill="#fff" stroke="#5c5c5c" stroke-width="1"/><path d="M252 116.5v-4.2a1.4 1.6 0 0 1 2.8 0v2" fill="none" stroke="#5c5c5c" stroke-width="1"/><path d="M259.4 114.2c1.8 1.4 2.6 3 2.4 4.6c-0.2 1.2-1.6 1.2-1.8 0c-0.2-1.4-0.2-2.8-0.6-4.6z" fill="#1e82d2"/><rect x="246" y="122.2" width="16" height="3.6" fill="#ffe669"/><path d="M267.9 116.8h5.4l-2.7 3.2z" fill="#6e6e6e"/><text x="283.4" y="121.8" font-size="13.4" fill="#1f2d54" stroke="#1f2d54" stroke-width="0.45" font-family="Liberation Sans" textLength="9.6" lengthAdjust="spacingAndGlyphs">A</text><rect x="280" y="122.2" width="16" height="3.6" fill="#f00"/><path d="M301.6 116.8h5.4l-2.7 3.2z" fill="#6e6e6e"/><path d="M313.0 146.5h-5.5v5.5" fill="none" stroke="#6a6668" stroke-width="1"/><path d="M310.1 149.1L313.1 152.1" fill="none" stroke="#6a6668" stroke-width="1"/><path d="M313.8 149.5V152.9H310.4z" fill="#6a6668"/>
<rect x="331" y="71" width="14" height="1" fill="#777"/><rect x="331" y="74" width="14" height="1" fill="#777"/><rect x="331" y="77" width="14" height="1" fill="#777"/><rect x="353" y="75" width="14" height="1" fill="#777"/><rect x="353" y="78" width="14" height="1" fill="#777"/><rect x="353" y="81" width="14" height="1" fill="#777"/><rect x="375" y="80" width="14" height="1" fill="#777"/><rect x="375" y="83" width="14" height="1" fill="#777"/><rect x="375" y="86" width="14" height="1" fill="#777"/><text x="400.6" y="78.6" font-size="9.6" fill="#1f2d54" font-family="Liberation Sans" textLength="11.8" lengthAdjust="spacingAndGlyphs">ab</text><text x="400.8" y="85.6" font-size="9.6" fill="#1f2d54" font-family="Liberation Sans">c</text><path d="M412 80.3v3h-4M409.6 81.6l-1.8 1.7l1.8 1.7" fill="none" stroke="#1e82d2" stroke-width="1"/><rect x="331" y="97" width="14" height="1" fill="#777"/><rect x="353" y="97" width="14" height="1" fill="#777"/><rect x="375" y="97" width="14" height="1" fill="#777"/><rect x="331" y="100" width="10" height="1" fill="#777"/><rect x="355" y="100" width="10" height="1" fill="#777"/><rect x="379" y="100" width="10" height="1" fill="#777"/><rect x="331" y="103" width="14" height="1" fill="#777"/><rect x="353" y="103" width="14" height="1" fill="#777"/><rect x="375" y="103" width="14" height="1" fill="#777"/><rect x="331" y="106" width="10" height="1" fill="#777"/><rect x="355" y="106" width="10" height="1" fill="#777"/><rect x="379" y="106" width="10" height="1" fill="#777"/><rect x="399.5" y="94.5" width="14.5" height="14" fill="#fff" stroke="#6e6e6e" stroke-width="1"/><path d="M399.5 97.5h14.5M399.5 105.5h14.5M406.7 94.5v3M406.7 105.5v3" stroke="#6e6e6e" stroke-width="1"/><path d="M402 101.5h9.5M403.6 99.9l-1.6 1.6l1.6 1.6M409.9 99.9l1.6 1.6l-1.6 1.6" fill="none" stroke="#1e82d2" stroke-width="1"/><path d="M420.7 101h5.4l-2.7 3.2z" fill="#6e6e6e"/><rect x="330" y="118" width="16" height="1" fill="#777"/><rect x="330" y="130" width="16" height="1" fill="#777"/><rect x="338" y="121" width="8" height="1" fill="#777"/><rect x="338" y="124" width="8" height="1" fill="#777"/><rect x="338" y="127" width="8" height="1" fill="#777"/><rect x="352" y="118" width="16" height="1" fill="#777"/><rect x="352" y="130" width="16" height="1" fill="#777"/><rect x="360" y="121" width="8" height="1" fill="#777"/><rect x="360" y="124" width="8" height="1" fill="#777"/><rect x="360" y="127" width="8" height="1" fill="#777"/><path d="M330.8 124.5h6.4M334 121.3l-3.2 3.2l3.2 3.2" fill="none" stroke="#1e82d2" stroke-width="1.6"/><path d="M352.2 124.5h6.4M355.4 121.3l3.2 3.2l-3.2 3.2" fill="none" stroke="#1e82d2" stroke-width="1.6"/><text transform="translate(387 130.3) rotate(-47)" font-size="10.6" fill="#1f2d54" stroke="#1f2d54" stroke-width="0.25" font-family="Liberation Sans" textLength="11.6" lengthAdjust="spacingAndGlyphs">ab</text><path d="M389.6 131.5L398.3 122.9" fill="none" stroke="#1f2d54" stroke-width="1.2"/><path d="M395.2 122.4h3.7v3.7z" fill="#1f2d54"/><path d="M403 124h5.4l-2.7 3.2z" fill="#6e6e6e"/><path d="M433.0 146.5h-5.5v5.5" fill="none" stroke="#6a6668" stroke-width="1"/><path d="M430.1 149.1L433.1 152.1" fill="none" stroke="#6a6668" stroke-width="1"/><path d="M433.8 149.5V152.9H430.4z" fill="#6a6668"/>
<path d="M515 78h5.4l-2.7 3.2z" fill="#6e6e6e"/><rect x="450.8" y="95.2" width="14.4" height="7" fill="#fff" stroke="#1e82d2" stroke-width="1.7"/><circle cx="458.6" cy="98.7" r="1.8" fill="#1a9a7a"/><rect x="459.5" y="101" width="6.5" height="1.3" rx="0.6" fill="#f5c15c"/><rect x="459.5" y="103" width="6.5" height="1.3" rx="0.6" fill="#f5c15c"/><rect x="459.5" y="105" width="6.5" height="1.3" rx="0.6" fill="#f5c15c"/><rect x="454" y="106.5" width="7" height="1.3" rx="0.6" fill="#f5c15c"/><rect x="454" y="108.5" width="7" height="1.3" rx="0.6" fill="#f5c15c"/><rect x="460" y="107" width="5.5" height="1.3" rx="0.6" fill="#f5c15c"/><path d="M472 100.8h5.4l-2.7 3.2z" fill="#6e6e6e"/><text x="459.5" y="124.3" font-size="8.6" fill="#1f2d54" stroke="#1f2d54" stroke-width="0.3" font-family="Liberation Sans" textLength="4.8" lengthAdjust="spacingAndGlyphs">0</text><text x="451.5" y="131.5" font-size="8.6" fill="#1f2d54" stroke="#1f2d54" stroke-width="0.3" font-family="Liberation Sans" textLength="12.6" lengthAdjust="spacingAndGlyphs">,00</text><path d="M450.8 121.3h6.2M453.4 118.6l-2.7 2.7l2.7 2.7" fill="none" stroke="#1e82d2" stroke-width="1.6"/><text x="473.6" y="124.3" font-size="8.6" fill="#1f2d54" stroke="#1f2d54" stroke-width="0.3" font-family="Liberation Sans" textLength="12.6" lengthAdjust="spacingAndGlyphs">,00</text><text x="478.6" y="131.5" font-size="8.6" fill="#1f2d54" stroke="#1f2d54" stroke-width="0.3" font-family="Liberation Sans" textLength="7.6" lengthAdjust="spacingAndGlyphs">,0</text><path d="M472.2 128.8h6.2M475.8 126.1l2.7 2.7l-2.7 2.7" fill="none" stroke="#1e82d2" stroke-width="1.6"/><path d="M527.0 146.5h-5.5v5.5" fill="none" stroke="#6a6668" stroke-width="1"/><path d="M524.1 149.1L527.1 152.1" fill="none" stroke="#6a6668" stroke-width="1"/><path d="M527.8 149.5V152.9H524.4z" fill="#6a6668"/>
<rect x="544.5" y="71.5" width="13" height="12" fill="#fff" stroke="#6e6e6e" stroke-width="1"/><path d="M551.5 71.5v12M554.8 71.5v12M544.5 75.5h13M544.5 79.5h13" stroke="#b8b8b8" stroke-width="1"/><rect x="545" y="72" width="6" height="3" fill="#c55a11"/><rect x="545" y="76" width="9" height="3" fill="#1e82d2"/><rect x="545" y="80" width="4" height="3" fill="#c55a11"/><rect x="550.5" y="78.5" width="9" height="8" fill="#fff" stroke="#6e6e6e" stroke-width="1"/><path d="M552.5 81.5h5M552.5 83.8h5M556.2 80.2l-2.4 5" stroke="#1f2d54" stroke-width="0.9"/><path d="M718 78h5.2l-2.6 3.2z" fill="#6e6e6e"/><rect x="544.5" y="94.5" width="13" height="11.5" fill="#fff" stroke="#6e6e6e" stroke-width="1"/><path d="M548.8 94.5v11.5M553.2 94.5v11.5M544.5 98.0h13M544.5 102.0h13" stroke="#a8a8a8" stroke-width="1"/><rect x="549.3" y="98.5" width="3.4" height="3" fill="#cfcfcf"/><path d="M559.6 96.7l-6.2 7.4l2 1.6l5.2-6z" fill="#6e6e6e" stroke="#f3f3f3" stroke-width="0.6"/><path d="M548.2 110.1c1.4-1.4 2.2-4.2 4.6-5.2c1.6-0.4 3 1 2.8 2.4c-0.6 2.2-4 3-7.4 2.8z" fill="#1e82d2"/><circle cx="553.6" cy="106.1" r="1.1" fill="#5fd0c0"/><rect x="544.5" y="117.5" width="13" height="11.5" fill="#fff" stroke="#6e6e6e" stroke-width="1"/><path d="M548.8 117.5v11.5M553.2 117.5v11.5M544.5 121.0h13M544.5 125.0h13" stroke="#a8a8a8" stroke-width="1"/><rect x="549.3" y="121.5" width="3.4" height="3" fill="#cfcfcf"/><path d="M559.6 119.7l-6.2 7.4l2 1.6l5.2-6z" fill="#6e6e6e" stroke="#f3f3f3" stroke-width="0.6"/><path d="M548.2 133.1c1.4-1.4 2.2-4.2 4.6-5.2c1.6-0.4 3 1 2.8 2.4c-0.6 2.2-4 3-7.4 2.8z" fill="#1e82d2"/><circle cx="553.6" cy="129.1" r="1.1" fill="#5fd0c0"/><path d="M722 100.8h5.2l-2.6 3.2z" fill="#6e6e6e"/><path d="M634 124h5.2l-2.6 3.2z" fill="#6e6e6e"/>
<path d="M753.5 71.5h8.5v4h-8.5zM757.7 71.5v4M753.5 81.5h8.5v5h-8.5zM757.7 81.5v5M753.5 84h8.5" fill="#fff" stroke="#6e6e6e" stroke-width="1"/><path d="M760.5 76.5h8.3v3.6h-8.3zM764.6 76.5v3.6" fill="#d8d8d8" stroke="#6e6e6e" stroke-width="1"/><path d="M753.6 78.4h6M756.6 75.4l-3 3l3 3" fill="none" stroke="#1e82d2" stroke-width="1.7"/><path d="M830 78h5.4l-2.7 3.2z" fill="#6e6e6e"/><path d="M753.5 94.5h8.5v3.6h-8.5zM757.7 94.5v3.6M753.5 104.5h8.5v5h-8.5zM757.7 104.5v5M753.5 107h8.5" fill="#fff" stroke="#6e6e6e" stroke-width="1"/><path d="M756.5 99.5h5.5v3.6h-5.5z" fill="#d8d8d8" stroke="#6e6e6e" stroke-width="1"/><path d="M762 97.6l6.6 7M768.6 97.6l-6.6 7" stroke="#f0a030" stroke-width="1.4"/><path d="M825.9 101h5.4l-2.7 3.2z" fill="#6e6e6e"/><path d="M753.8 116.5v4.2M765.4 116.5v4.2M755.6 118.6h8M757.2 116.9l-1.7 1.7l1.7 1.7M762 116.9l1.7 1.7l-1.7 1.7" fill="none" stroke="#1e82d2" stroke-width="1.3"/><rect x="753.5" y="121.5" width="14" height="10.6" fill="#fff" stroke="#6e6e6e" stroke-width="1"/><path d="M753.5 124.2h14M753.5 128h14M753.5 130.4h14M756.3 121.5v10.6M760.8 121.5v10.6M764.4 121.5v10.6" stroke="#b0b0b0" stroke-width="0.8"/><rect x="756.3" y="124.2" width="4.5" height="3.8" fill="#1e82d2"/><path d="M818.2 124h5.4l-2.7 3.2z" fill="#6e6e6e"/>
<path d="M878.1 74.6v-2.5h-12.6l6.9 6.4l-6.9 6.4h12.6v-2.5" fill="none" stroke="#1f2d54" stroke-width="1.9" stroke-linejoin="miter"/><path d="M886.1 78h5.4l-2.7 3.2z" fill="#6e6e6e"/><text x="900.1" y="77.5" font-size="8.8" font-weight="bold" fill="#1e82d2" stroke="#1e82d2" stroke-width="0.2" font-family="Liberation Sans" textLength="6" lengthAdjust="spacingAndGlyphs">A</text><text x="900.9" y="86.4" font-size="7.8" font-weight="bold" fill="#6e6e6e" font-family="Liberation Sans" textLength="4.8" lengthAdjust="spacingAndGlyphs">Я</text><path d="M908.1 76h7.2v1.6l-2.4 2.4v2.7h-2.4v-2.7l-2.4-2.4z" fill="#6e6e6e"/><path d="M919 78h5.4l-2.7 3.2z" fill="#6e6e6e"/><rect x="865.5" y="94.5" width="13.4" height="15" fill="#fff" stroke="#6e6e6e" stroke-width="1"/><rect x="865" y="94" width="14.4" height="4" fill="#6e6e6e"/><path d="M872.2 99.4v7M868.6 103.2l3.6 3.6l3.6-3.6" fill="none" stroke="#1e82d2" stroke-width="2.2"/><path d="M884 101h5.4l-2.7 3.2z" fill="#6e6e6e"/><circle cx="908.8" cy="100.4" r="3.7" fill="#fff" stroke="#1e82d2" stroke-width="1.5"/><path d="M906 103.3l-4.4 4.2" stroke="#1e82d2" stroke-width="2.3" stroke-linecap="round"/><path d="M919 101h5.4l-2.7 3.2z" fill="#6e6e6e"/><g transform="translate(871.7 124.3) rotate(-41)"><rect x="-7" y="-3.1" width="14" height="6.2" rx="0.8" fill="#f8cf7c"/><rect x="-3.4" y="-3.1" width="0.8" height="6.2" fill="#f3f3f3"/></g><path d="M884 124h5.4l-2.7 3.2z" fill="#6e6e6e"/><path d="M993.6 151l3.9-3.9l3.9 3.9" fill="none" stroke="#605c5e" stroke-width="2"/>
<path d="M94 178.2h7l-3.5 3.6z" fill="#555"/><rect x="122.2" y="176.2" width="1.6" height="1.6" fill="#b0b0b0"/><rect x="122.2" y="180.4" width="1.6" height="1.6" fill="#b0b0b0"/><rect x="122.2" y="184.6" width="1.6" height="1.6" fill="#b0b0b0"/><path d="M151.8 176.2l10 9.4M161.8 176.2l-10 9.4" stroke="#b8b8b8" stroke-width="1.4"/><path d="M188 181.8l3.8 3.6l7.6-9" fill="none" stroke="#c2c2c2" stroke-width="2.1"/><text x="223.4" y="184.6" font-size="13.6" font-style="italic" font-weight="bold" fill="#595959" font-family="Liberation Serif" textLength="5.4" lengthAdjust="spacingAndGlyphs">f</text><text x="228.6" y="185.4" font-size="10" font-style="italic" font-weight="bold" fill="#595959" font-family="Liberation Serif" textLength="5.6" lengthAdjust="spacingAndGlyphs">x</text><path d="M994.6 178.4l3.4 3.2l3.4-3.2" fill="none" stroke="#555" stroke-width="1.6"/><path d="M26 208.5v12.2h-12.6z" fill="#b4b4b4"/>
<path d="M998 215l3.5-4.1l3.5 4.1z" fill="#666"/><path d="M998 663.6l3.5 4.1l3.5-4.1z" fill="#666"/><path d="M633.2 682.7l-4.2 3.8l4.2 3.8z" fill="#666"/><path d="M981.8 682.7l4.2 3.8l-4.2 3.8z" fill="#666"/><rect x="607" y="681" width="2" height="2" fill="#b4b4b4"/><rect x="607" y="685" width="2" height="2" fill="#b4b4b4"/><rect x="607" y="689" width="2" height="2" fill="#b4b4b4"/><path d="M32 681.8v7.2l-3.9-3.6z" fill="#c2c2c2"/><path d="M57 681.8v7.2l3.9-3.6z" fill="#c2c2c2"/><circle cx="248.8" cy="685.8" r="7.4" fill="none" stroke="#777" stroke-width="1.1"/><path d="M248.8 681.9v7.8M244.9 685.8h7.8" stroke="#666" stroke-width="1.5"/><rect x="74.8" y="705.3" width="10.8" height="11" fill="#fff" stroke="#203864" stroke-width="1.2"/><rect x="74.2" y="704.7" width="12" height="3.4" fill="#203864"/><path d="M76.2 710.6h8M76.2 712.6h8M76.2 714.6h8" stroke="#203864" stroke-width="1" stroke-dasharray="1.6 0.8"/><circle cx="76" cy="706.4" r="2.4" fill="#203864" stroke="#f3f3f3" stroke-width="0.6"/><rect x="724.5" y="704.5" width="12" height="12" fill="none" stroke="#777" stroke-width="1"/><path d="M728.5 704.5v12M732.5 704.5v12M724.5 708.5h12M724.5 712.5h12" stroke="#777" stroke-width="1"/><rect x="762.5" y="704.5" width="13" height="12" fill="none" stroke="#777" stroke-width="1"/><rect x="765.5" y="706.5" width="7" height="8" fill="none" stroke="#777" stroke-width="1"/><path d="M767 708.5h4M767 710.5h4M767 712.5h4" stroke="#777" stroke-width="1"/><rect x="800.5" y="704.5" width="13" height="11" fill="none" stroke="#777" stroke-width="1"/><path d="M804.5 704.5v6M809.5 704.5v6M800.5 710.5h13" fill="none" stroke="#777" stroke-width="1"/><rect x="831" y="710" width="6" height="1.8" fill="#1f2d54"/><path d="M948 707.5v7.4M944.3 711.2h7.4" stroke="#3b4257" stroke-width="1.5"/></svg>
</div></body></html>
